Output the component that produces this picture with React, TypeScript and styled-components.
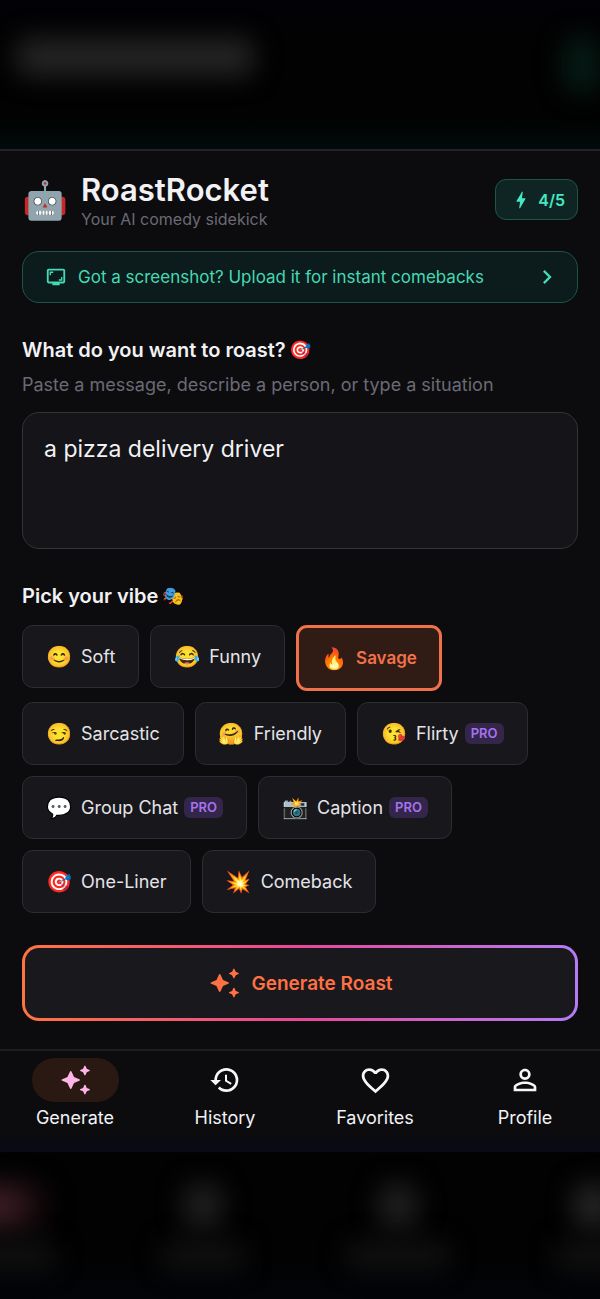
import React, { useState } from 'react';
import styled, { createGlobalStyle } from 'styled-components';
import {
  MdBolt,
  MdChevronRight,
  MdFavoriteBorder,
  MdHistory,
  MdOutlineScreenshotMonitor,
  MdPersonOutline,
} from 'react-icons/md';

const GlobalStyle = createGlobalStyle`
  *, *::before, *::after { box-sizing: border-box; }
  body {
    margin: 0;
    background: #020203;
    color: #f2f2f4;
    font-family: Inter, 'Noto Sans', 'Noto Color Emoji', sans-serif;
  }
  button, textarea { font: inherit; color: inherit; margin: 0; }
  button { cursor: pointer; }
  h1, h2, p { margin: 0; }
`;

const Page = styled.div`
  display: flex;
  flex-direction: column;
  min-height: 100vh;
  overflow: hidden;
`;

const TopBackdrop = styled.div`
  display: flex;
  justify-content: space-between;
  height: 149px;
  padding: 38px 0 0 16px;
  overflow: hidden;
  background: linear-gradient(#020206, #020202 30%, #020202 80%, #020a0b);
`;

const BottomBackdrop = styled.div`
  display: grid;
  grid-template-columns: repeat(4, 1fr);
  flex: 1;
  min-height: 147px;
  margin: 0 -15%;
  overflow: hidden;
  background: linear-gradient(#020203, #020203 70%, #020408);
`;

const GhostItem = styled.div`
  display: flex;
  flex-direction: column;
  align-items: center;
  gap: 14px;
  padding-top: 32px;
`;

const Ghost = styled.div<{ $w: number; $h: number; $color: string }>`
  width: ${(p) => p.$w}px;
  height: ${(p) => p.$h}px;
  border-radius: 12px;
  background: ${(p) => p.$color};
  filter: blur(13px);
`;

const Screen = styled.div`
  border-top: 2px solid #222227;
  background: #0c0c0f;
`;

const Main = styled.main`
  padding: 28px 22px;
`;

const Header = styled.header`
  display: flex;
  align-items: center;
  gap: 13px;
  height: 41px;
`;

const Emoji = styled.span<{ $size: number; $box: number }>`
  display: inline-flex;
  flex: none;
  align-items: center;
  justify-content: center;
  width: ${(p) => p.$box}px;
  height: ${(p) => p.$box}px;
  font-size: ${(p) => p.$size}px;
  line-height: 1;
`;

const Brand = styled.div`
  flex: 1;
  padding-top: 2px;
`;

const Title = styled.h1`
  font-size: 31px;
  line-height: 36px;
  font-weight: 600;
`;

const Tagline = styled.p`
  font-size: 16px;
  line-height: 22px;
  color: #6b6a74;
`;

const Credits = styled.button`
  display: flex;
  align-items: center;
  gap: 6px;
  height: 41px;
  padding: 0 12px 0 14px;
  border: 1px solid #1d5549;
  border-radius: 11px;
  background: #0f2523;
  color: #45e8c4;
  font-size: 16px;
  font-weight: 600;
`;

const Banner = styled.button`
  display: flex;
  align-items: center;
  gap: 11px;
  width: 100%;
  height: 52px;
  margin-top: 31px;
  padding: 0 16px 0 22px;
  border: 1px solid #1d5549;
  border-radius: 17px;
  background: #0c1b1c;
  color: #45d9b4;
  font-size: 17px;
  text-align: left;
`;

const BannerText = styled.span`
  flex: 1;
`;

const Heading = styled.h2`
  display: flex;
  align-items: center;
  gap: 4px;
  font-size: 20px;
  line-height: 28px;
  font-weight: 600;
`;

const Prompt = styled.section`
  margin-top: 33px;
`;

const Hint = styled.p`
  margin: 9px 0 15px;
  font-size: 18px;
  line-height: 24px;
  color: #6b6a74;
`;

const Field = styled.textarea`
  display: block;
  width: 100%;
  height: 137px;
  padding: 21px;
  border: 1px solid #333338;
  border-radius: 17px;
  outline: none;
  resize: none;
  background: #141419;
  font-size: 23px;
  line-height: 30px;
`;

const VibeSection = styled.section`
  margin-top: 33px;
`;

const Chips = styled.div`
  display: flex;
  flex-wrap: wrap;
  align-items: flex-start;
  gap: 11px;
  margin-top: 15px;
`;

const Chip = styled.button<{ $active: boolean }>`
  display: flex;
  align-items: center;
  height: ${(p) => (p.$active ? 66 : 63)}px;
  padding: 0 ${(p) => (p.$active ? 22 : 23)}px;
  border: ${(p) => (p.$active ? '3px solid #f0724a' : '1px solid #2c2c31')};
  border-radius: 11px;
  background: ${(p) => (p.$active ? '#301b15' : '#17171c')};
  color: ${(p) => (p.$active ? '#f0724a' : '#e4e4e8')};
  font-size: ${(p) => (p.$active ? 17 : 18)}px;
  font-weight: ${(p) => (p.$active ? 600 : 400)};
`;

const ChipLabel = styled.span`
  margin-left: 9px;
`;

const Pro = styled.span`
  margin-left: 6px;
  padding: 0 6px;
  border-radius: 6px;
  background: #33264a;
  color: #a673ee;
  font-size: 13px;
  line-height: 21px;
  font-weight: 600;
`;

const Generate = styled.button`
  display: flex;
  align-items: center;
  justify-content: center;
  gap: 10px;
  width: 100%;
  height: 76px;
  margin-top: 32px;
  border: 3px solid transparent;
  border-radius: 17px;
  background:
    linear-gradient(#18181d, #18181d) padding-box,
    linear-gradient(90deg, #ff7440, #e8489a 50%, #b57cf5) border-box;
  color: #ff7043;
  font-size: 19px;
  font-weight: 600;
`;

const Nav = styled.nav`
  display: grid;
  grid-template-columns: repeat(4, 1fr);
  height: 103px;
  padding-top: 7px;
  border-top: 2px solid #1e1e22;
  background: linear-gradient(#0c0c0f 84%, #090a14 90%);
`;

const NavItem = styled.a`
  display: flex;
  flex-direction: column;
  align-items: center;
  gap: 4px;
  color: #f2f2f4;
  font-size: 18px;
  line-height: 24px;
  text-decoration: none;
`;

const Pill = styled.span<{ $active: boolean }>`
  display: flex;
  align-items: center;
  justify-content: center;
  width: 87px;
  height: 44px;
  border-radius: 22px;
  background: ${(p) => (p.$active ? '#2a1912' : 'transparent')};
  color: ${(p) => (p.$active ? '#ffb5e8' : '#f7f7f9')};
`;

const Sparkles = ({ size = 34 }: { size?: number }) => (
  <svg width={size} height={size} viewBox="0 0 24 24" fill="currentColor" aria-hidden="true">
    <path d="M9 5.6Q9.4 5.6 9.6 6.1L11.3 9.8 15 11.5Q15.5 11.7 15.5 12T15 12.5L11.3 14.2 9.6 17.9Q9.4 18.4 9 18.4T8.4 17.9L6.7 14.2 3 12.5Q2.5 12.3 2.5 12T3 11.5L6.7 9.8 8.4 6.1Q8.6 5.6 9 5.6Z" />
    <path d="M19 1.8Q19.3 1.8 19.4 2.1L20.3 4.1 22.2 4.9Q22.5 5.1 22.5 5.3T22.2 5.7L20.3 6.5 19.4 8.4Q19.3 8.7 19 8.7T18.6 8.4L17.7 6.5 15.8 5.7Q15.5 5.6 15.5 5.3T15.8 4.9L17.7 4.1 18.6 2.1Q18.7 1.8 19 1.8Z" />
    <path d="M19 15.3Q19.3 15.3 19.4 15.6L20.3 17.6 22.2 18.4Q22.5 18.6 22.5 18.8T22.2 19.2L20.3 20 19.4 21.9Q19.3 22.2 19 22.2T18.6 21.9L17.7 20 15.8 19.2Q15.5 19.1 15.5 18.8T15.8 18.4L17.7 17.6 18.6 15.6Q18.7 15.3 19 15.3Z" />
  </svg>
);

const vibes = [
  { name: 'Soft', emoji: '😊' },
  { name: 'Funny', emoji: '😂' },
  { name: 'Savage', emoji: '🔥' },
  { name: 'Sarcastic', emoji: '😏' },
  { name: 'Friendly', emoji: '🤗' },
  { name: 'Flirty', emoji: '😘', pro: true },
  { name: 'Group Chat', emoji: '💬', pro: true },
  { name: 'Caption', emoji: '📸', pro: true },
  { name: 'One-Liner', emoji: '🎯' },
  { name: 'Comeback', emoji: '💥' },
];

const tabs = [
  { name: 'Generate', icon: <Sparkles /> },
  { name: 'History', icon: <MdHistory size={32} /> },
  { name: 'Favorites', icon: <MdFavoriteBorder size={33} /> },
  { name: 'Profile', icon: <MdPersonOutline size={34} /> },
];

export default function App() {
  const [vibe, setVibe] = useState('Savage');
  const [text, setText] = useState('a pizza delivery driver');

  return (
    <Page>
      <GlobalStyle />
      <TopBackdrop aria-hidden="true">
        <Ghost $w={238} $h={38} $color="#242424" />
        <Ghost $w={36} $h={54} $color="#061c16" />
      </TopBackdrop>
      <Screen>
        <Main>
          <Header>
            <Emoji $size={37} $box={46}>🤖</Emoji>
            <Brand>
              <Title>RoastRocket</Title>
              <Tagline>Your AI comedy sidekick</Tagline>
            </Brand>
            <Credits type="button">
              <MdBolt size={22} />
              4/5
            </Credits>
          </Header>

          <Banner type="button">
            <MdOutlineScreenshotMonitor size={22} />
            <BannerText>Got a screenshot? Upload it for instant comebacks</BannerText>
            <MdChevronRight size={28} />
          </Banner>

          <Prompt>
            <Heading>
              <label htmlFor="prompt">What do you want to roast?</label>
              <Emoji $size={18} $box={22}>🎯</Emoji>
            </Heading>
            <Hint id="prompt-hint">Paste a message, describe a person, or type a situation</Hint>
            <Field
              id="prompt"
              aria-describedby="prompt-hint"
              value={text}
              onChange={(e) => setText(e.target.value)}
            />
          </Prompt>

          <VibeSection>
            <Heading>
              Pick your vibe
              <Emoji $size={18} $box={22}>🎭</Emoji>
            </Heading>
            <Chips>
              {vibes.map((v) => (
                <Chip
                  key={v.name}
                  type="button"
                  $active={v.name === vibe}
                  aria-pressed={v.name === vibe}
                  onClick={() => setVibe(v.name)}
                >
                  <Emoji $size={21} $box={26}>{v.emoji}</Emoji>
                  <ChipLabel>{v.name}</ChipLabel>
                  {v.pro && <Pro>PRO</Pro>}
                </Chip>
              ))}
            </Chips>
          </VibeSection>

          <Generate type="button">
            <Sparkles />
            Generate Roast
          </Generate>
        </Main>

        <Nav>
          {tabs.map((t, i) => (
            <NavItem key={t.name} href={`#${t.name.toLowerCase()}`}>
              <Pill $active={i === 0}>{t.icon}</Pill>
              {t.name}
            </NavItem>
          ))}
        </Nav>
      </Screen>
      <BottomBackdrop aria-hidden="true">
        <GhostItem>
          <Ghost $w={76} $h={44} $color="linear-gradient(90deg, #3a1c24 50%, #0c0404)" />
          <Ghost $w={96} $h={26} $color="#121212" />
        </GhostItem>
        <GhostItem>
          <Ghost $w={38} $h={44} $color="#202020" />
          <Ghost $w={84} $h={26} $color="#121212" />
        </GhostItem>
        <GhostItem>
          <Ghost $w={38} $h={44} $color="#202020" />
          <Ghost $w={104} $h={26} $color="#121212" />
        </GhostItem>
        <GhostItem>
          <Ghost $w={38} $h={44} $color="#262626" />
          <Ghost $w={76} $h={26} $color="#121212" />
        </GhostItem>
      </BottomBackdrop>
    </Page>
  );
}
